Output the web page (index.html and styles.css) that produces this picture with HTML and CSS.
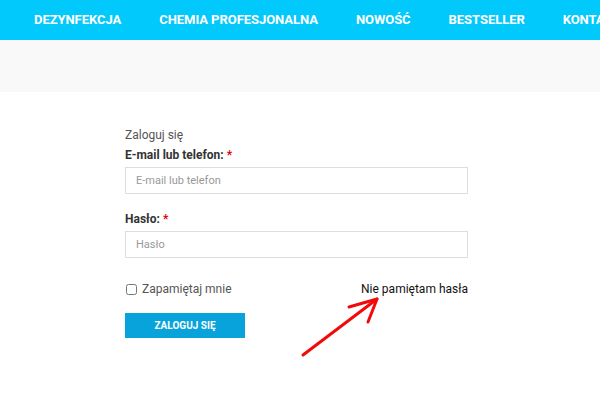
FILE: index.html
```html
<!DOCTYPE html>
<html lang="pl">
<head>
  <meta charset="utf-8">
  <title>Logowanie</title>
  <link rel="stylesheet" href="styles.css">
</head>
<body>

  <!-- Top menu -->
  <nav class="topbar">
    <ul class="menu">
      <li><a href="#">Dezynfekcja</a></li>
      <li><a href="#">Chemia profesjonalna</a></li>
      <li><a href="#">Nowość</a></li>
      <li><a href="#">Bestseller</a></li>
      <li><a href="#">Kontakt</a></li>
    </ul>
  </nav>

  <div class="page-band"></div>

  <!-- Login form -->
  <main class="login">
    <form class="login-form" onsubmit="return false">
      <p class="login-title">Zaloguj się</p>

      <label class="field-label" for="login">E-mail lub telefon: <span class="req">*</span></label>
      <input class="field" id="login" type="text" placeholder="E-mail lub telefon">

      <label class="field-label field-label--gap" for="pass">Hasło: <span class="req">*</span></label>
      <input class="field" id="pass" type="password" placeholder="Hasło">

      <div class="form-row">
        <label class="remember"><input type="checkbox"> Zapamiętaj mnie</label>
        <a class="forgot" href="#">Nie pamiętam hasła</a>
      </div>

      <button class="btn-login" type="submit">Zaloguj się</button>
    </form>

    <!-- red annotation arrow -->
    <svg class="annot-arrow" width="90" height="70" viewBox="0 0 90 70">
      <g fill="none" stroke="#f20a0a" stroke-width="3" stroke-linecap="round" stroke-linejoin="round">
        <path d="M5 60 L79 4"/>
        <path d="M51 12 L79 4 L70 27"/>
      </g>
    </svg>
  </main>

</body>
</html>
```

FILE: styles.css
```css
body {
  margin: 0;
  font-family: Roboto, "Liberation Sans", Arial, sans-serif;
  background: #fff;
  color: #333;
}

.topbar {
  background: #02c9fb;
  height: 40px;
  overflow: hidden;
}
.menu {
  list-style: none;
  margin: 0;
  padding: 0 0 0 15px;
  display: flex;
  white-space: nowrap;
}
.menu a {
  display: block;
  padding: 0 19px;
  line-height: 40px;
  font-size: 13px;
  font-weight: bold;
  letter-spacing: -0.05px;
  text-transform: uppercase;
  color: #fff;
  text-decoration: none;
}

.page-band {
  height: 52px;
  background: #f9f9f9;
}

.login {
  position: relative;
  min-height: 274px;
  padding: 34px 0 0 125px;
}
.login-form {
  width: 343px;
  font-size: 12px;
  line-height: 18px;
}
.login-title {
  margin: 0 0 2px;
  color: #555;
}
.field-label {
  display: block;
  font-weight: bold;
  color: #333;
  margin-bottom: 3px;
}
.field-label--gap {
  margin-top: 16px;
}
.req {
  color: #e30000;
}
.field {
  display: block;
  box-sizing: border-box;
  width: 343px;
  height: 27px;
  margin: 0;
  padding: 0 10px;
  border: 1px solid #ddd;
  font-family: inherit;
  font-size: 11px;
  color: #333;
}
.field::placeholder {
  color: #999;
}

.form-row {
  display: flex;
  justify-content: space-between;
  align-items: center;
  margin-top: 22px;
}
.remember {
  display: flex;
  align-items: center;
  color: #555;
}
.remember input {
  width: 11px;
  height: 11px;
  margin: 0 5px 0 1px;
}
.forgot {
  color: #111;
  text-decoration: none;
}

.btn-login {
  margin-top: 15px;
  width: 120px;
  height: 25px;
  border: none;
  background: #09a3dc;
  color: #fff;
  font-family: inherit;
  font-size: 10px;
  font-weight: bold;
  text-transform: uppercase;
  cursor: pointer;
}

.annot-arrow {
  position: absolute;
  left: 298px;
  top: 203px;
}
```
